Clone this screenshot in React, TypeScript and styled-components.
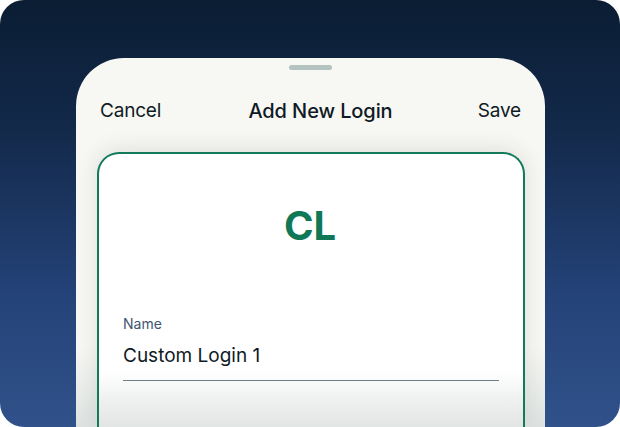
import React from "react";
import styled, { createGlobalStyle } from "styled-components";

const Global = createGlobalStyle`
  html, body { margin: 0; padding: 0; background: #ffffff; }
  body { font-family: Inter, "Noto Sans", "Liberation Sans", sans-serif; -webkit-font-smoothing: antialiased; }
`;

const Frame = styled.div`
  width: 620px;
  height: 427px;
  border-radius: 24px;
  overflow: hidden;
  background: linear-gradient(180deg, #0a1d33 0%, #13294a 30%, #244379 70%, #30518a 100%);
  display: flex;
  justify-content: center;
  padding-top: 58px;
  box-sizing: border-box;
`;

const Phone = styled.div`
  width: 469px;
  height: 369px;
  margin-left: 1px;
  background: linear-gradient(180deg, #f7f7f3 0px, #f7f7f3 290px, #e9ece9 335px, #dde2e0 369px);
  border-radius: 48px 48px 0 0;
  display: flex;
  flex-direction: column;
  align-items: center;
  padding-top: 7px;
  box-sizing: border-box;
  overflow: hidden;
`;

const Grabber = styled.div`
  width: 43px;
  height: 5px;
  border-radius: 3px;
  background: #b4c3bf;
`;

const Header = styled.div`
  align-self: stretch;
  display: flex;
  justify-content: space-between;
  align-items: center;
  height: 24px;
  margin-top: 29px;
  padding: 0 24px;
  color: #0f1a24;
`;

const HeaderButton = styled.span`
  font-size: 19px;
  font-weight: 400;
  line-height: 24px;
  letter-spacing: -0.2px;
`;

const Title = styled.span`
  font-size: 20px;
  font-weight: 450;
  line-height: 24px;
  letter-spacing: -0.1px;
  margin-left: 2px;
`;

const Card = styled.div`
  align-self: stretch;
  margin: 29px 20px 0 21px;
  flex: 1;
  background: linear-gradient(180deg, #ffffff 0px, #ffffff 218px, #f0f2f1 244px, #e0e4e2 275px);
  border: 2.5px solid #127a5b;
  border-bottom: none;
  border-radius: 22px 22px 0 0;
  box-shadow: 0 -2px 22px rgba(40, 60, 55, 0.12);
  display: flex;
  flex-direction: column;
  padding: 48px 24px 0 24px;
`;

const Initials = styled.div`
  text-align: center;
  font-size: 40px;
  font-weight: 700;
  line-height: 48px;
  color: #107857;
  margin-right: 2px;
`;

const Field = styled.div`
  margin-top: 65px;
  display: flex;
  flex-direction: column;
`;

const Label = styled.div`
  font-size: 14px;
  line-height: 17px;
  color: #3d5670;
`;

const Value = styled.div`
  margin-top: 12px;
  font-size: 19px;
  line-height: 23px;
  color: #0f1a24;
  padding-bottom: 13px;
  border-bottom: 1.5px solid #6f7f88;
`;

export default function App() {
  return (
    <>
      <Global />
      <Frame>
        <Phone>
          <Grabber />
          <Header>
            <HeaderButton>Cancel</HeaderButton>
            <Title>Add New Login</Title>
            <HeaderButton>Save</HeaderButton>
          </Header>
          <Card>
            <Initials>CL</Initials>
            <Field>
              <Label>Name</Label>
              <Value>Custom Login 1</Value>
            </Field>
          </Card>
        </Phone>
      </Frame>
    </>
  );
}
